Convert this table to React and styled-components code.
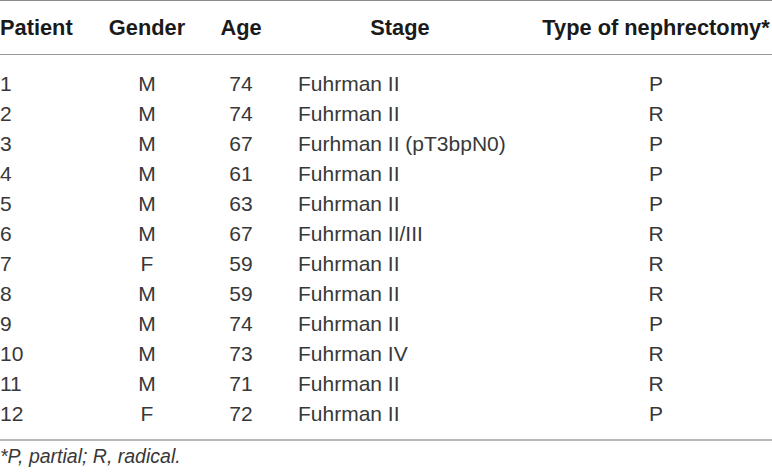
import React from 'react';
import styled, { createGlobalStyle } from 'styled-components';

const GlobalStyle = createGlobalStyle`
  html, body {
    margin: 0;
    padding: 0;
    background: #fff;
  }
  body {
    font-family: "Liberation Sans", Arial, sans-serif;
    color: #231f20;
  }
`;

const Container = styled.div`
  width: 772px;
  border-top: 1px solid #8c8c8c;
`;

const Row = styled.div`
  display: grid;
  grid-template-columns: 100px 94px 94px 224px 1fr;
  align-items: center;
  height: ${(p) => (p.$head ? '53px' : '30px')};
  font-size: ${(p) => (p.$head ? '21.8px' : '21px')};
  font-weight: ${(p) => (p.$head ? 700 : 400)};
  color: ${(p) => (p.$head ? '#1a1a1a' : '#383838')};
`;

const Head = styled.div`
  border-bottom: 1px solid #9a9a9a;
`;

const Body = styled.div`
  padding: 14px 0 10px;
  border-bottom: 2px solid #b8b8b8;
`;

const Cell = styled.div`
  white-space: nowrap;
  text-align: ${(p) => p.$align || 'center'};
  padding-left: ${(p) => p.$pad || 0}px;
`;

const Note = styled.div`
  padding-top: 4px;
  font-size: 19.5px;
  line-height: 22px;
  font-style: italic;
  color: #383838;
`;

const rows = [
  ['1', 'M', '74', 'Fuhrman II', 'P'],
  ['2', 'M', '74', 'Fuhrman II', 'R'],
  ['3', 'M', '67', 'Furhman II (pT3bpN0)', 'P'],
  ['4', 'M', '61', 'Fuhrman II', 'P'],
  ['5', 'M', '63', 'Fuhrman II', 'P'],
  ['6', 'M', '67', 'Fuhrman II/III', 'R'],
  ['7', 'F', '59', 'Fuhrman II', 'R'],
  ['8', 'M', '59', 'Fuhrman II', 'R'],
  ['9', 'M', '74', 'Fuhrman II', 'P'],
  ['10', 'M', '73', 'Fuhrman IV', 'R'],
  ['11', 'M', '71', 'Fuhrman II', 'R'],
  ['12', 'F', '72', 'Fuhrman II', 'P'],
];

export default function App() {
  return (
    <Container>
      <GlobalStyle />
      <Head>
        <Row $head>
          <Cell $align="left">Patient</Cell>
          <Cell>Gender</Cell>
          <Cell>Age</Cell>
          <Cell>Stage</Cell>
          <Cell $pad={28}>Type of nephrectomy*</Cell>
        </Row>
      </Head>
      <Body>
        {rows.map((r) => (
          <Row key={r[0]}>
            <Cell $align="left">{r[0]}</Cell>
            <Cell>{r[1]}</Cell>
            <Cell>{r[2]}</Cell>
            <Cell $align="left" $pad={10}>{r[3]}</Cell>
            <Cell $pad={28}>{r[4]}</Cell>
          </Row>
        ))}
      </Body>
      <Note>*P, partial; R, radical.</Note>
    </Container>
  );
}
